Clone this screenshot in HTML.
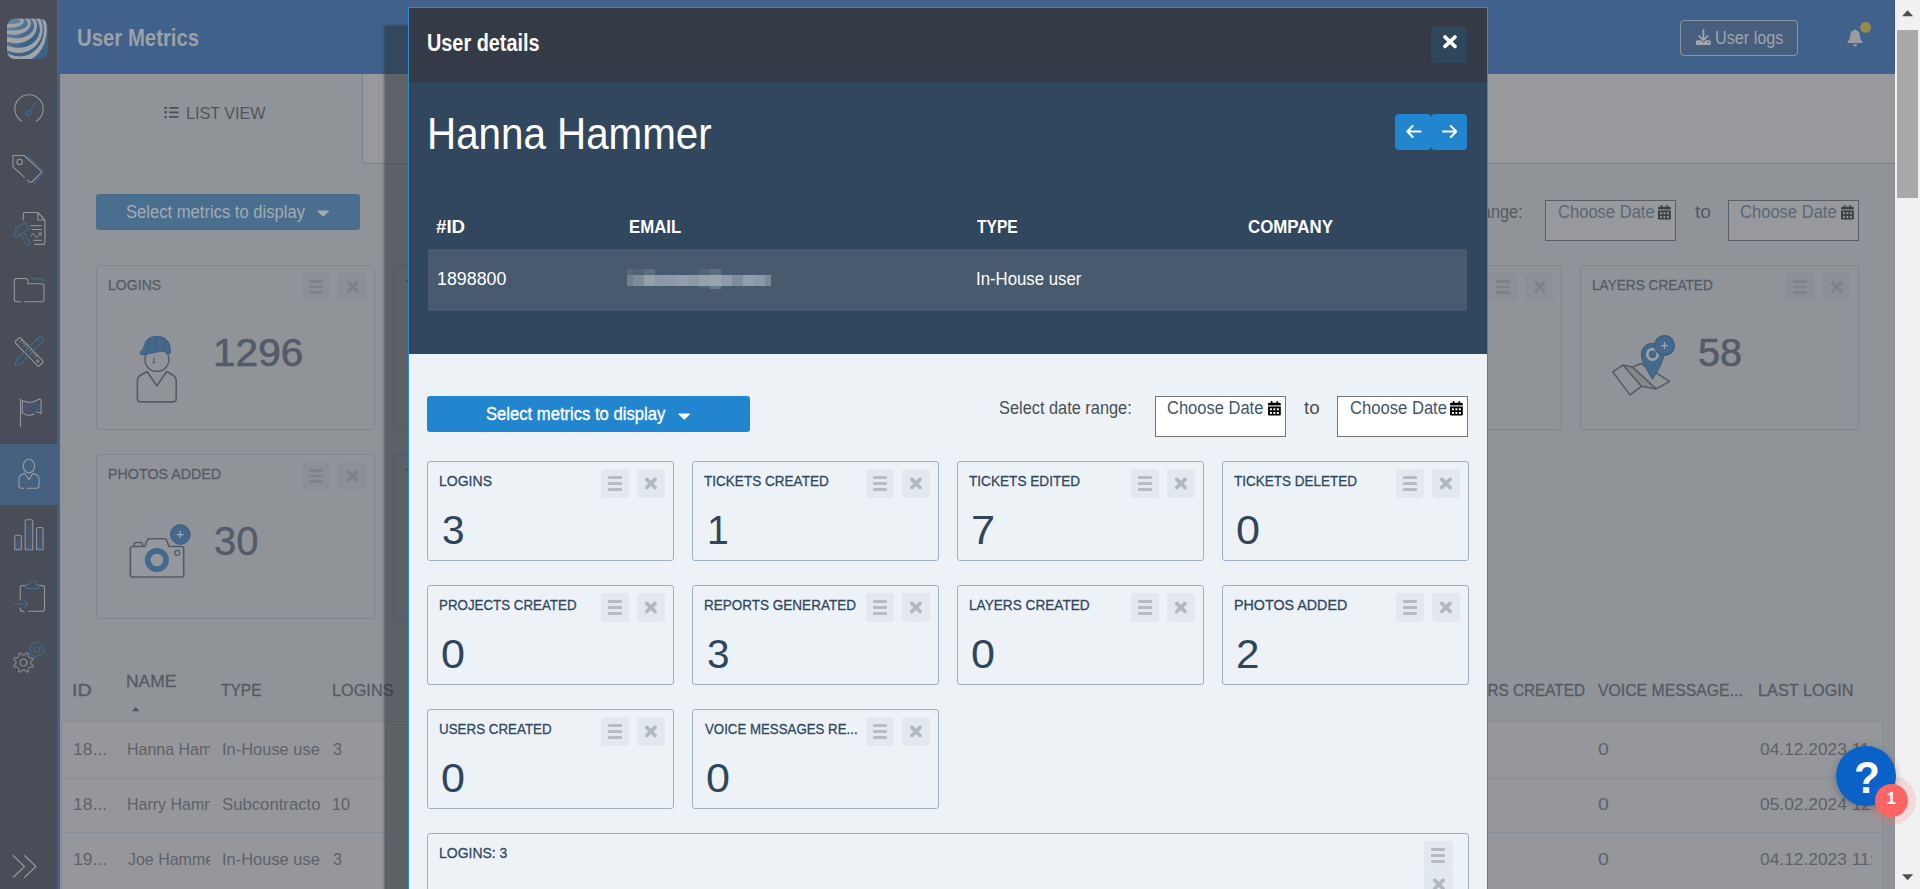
<!DOCTYPE html>
<html lang="en"><head><meta charset="utf-8"><title>User Metrics</title>
<style>
html,body{margin:0;padding:0;}
body{width:1920px;height:889px;overflow:hidden;position:relative;background:#909499;font-family:"Liberation Sans",sans-serif;}
.t{position:absolute;transform-origin:0 0;white-space:pre;font-family:"Liberation Sans",sans-serif;}
svg{position:absolute;overflow:visible;}
.clip{position:absolute;overflow:hidden;}

</style></head>
<body>
<div style="position:absolute;left:0px;top:0px;width:57px;height:889px;background:#484d57;"></div>
<div style="position:absolute;left:0px;top:138px;width:57px;height:1px;background:#434852;"></div>
<div style="position:absolute;left:0px;top:199px;width:57px;height:1px;background:#434852;"></div>
<div style="position:absolute;left:0px;top:260px;width:57px;height:1px;background:#434852;"></div>
<div style="position:absolute;left:0px;top:321px;width:57px;height:1px;background:#434852;"></div>
<div style="position:absolute;left:0px;top:382.5px;width:57px;height:1px;background:#434852;"></div>
<div style="position:absolute;left:0px;top:565.5px;width:57px;height:1px;background:#434852;"></div>
<div style="position:absolute;left:0px;top:626.5px;width:57px;height:1px;background:#434852;"></div>
<div style="position:absolute;left:0px;top:687.5px;width:57px;height:1px;background:#434852;"></div>
<div style="position:absolute;left:0px;top:841.5px;width:57px;height:1px;background:#434852;"></div>
<div style="position:absolute;left:0px;top:444px;width:57px;height:61px;background:#46607f;"></div>
<div style="position:absolute;left:57px;top:0px;width:3px;height:889px;background:#46618a;"></div>
<div style="position:absolute;left:60px;top:0px;width:1835px;height:74px;background:#3f618b;"></div>
<span class="t" style="left:76.98px;top:26.89px;font-size:23.4px;line-height:23.4px;color:#9da0a5;font-weight:700;transform:scaleX(0.8695);">User Metrics</span>
<div style="position:absolute;left:1680px;top:20px;width:116px;height:34px;border:1px solid #8d95a1;background:#475f7f;border-radius:4px;"></div>
<span class="t" style="left:1714.65px;top:28.76px;font-size:18px;line-height:18px;color:#a0a4ab;transform:scaleX(0.9001);">User logs</span>
<div style="position:absolute;left:362px;top:74px;width:1533px;height:89px;background:#97999d;border-left:1px solid #78818d;border-bottom:1px solid #78818d;border-bottom-left-radius:4px;"></div>
<span class="t" style="left:186.18px;top:104.61px;font-size:17px;line-height:17px;color:#50545a;transform:scaleX(0.9501);">LIST VIEW</span>
<div style="position:absolute;left:96px;top:194px;width:264px;height:36px;background:#4a6e8d;border-radius:3px;"></div>
<span class="t" style="left:126.05px;top:202.76px;font-size:18px;line-height:18px;color:#a3abb3;transform:scaleX(0.9222);">Select metrics to display</span>
<div style="position:absolute;left:397px;top:194px;width:200px;height:39px;border:1px solid #999ca1;border-radius:5px;"></div>
<span class="t" style="left:1389.76px;top:202.96px;font-size:18px;line-height:18px;color:#55595f;transform:scaleX(0.9085);">Select date range:</span>
<div style="position:absolute;left:1545px;top:200px;width:129px;height:39px;background:#97999d;border:1px solid #5a5e66;"></div>
<span class="t" style="left:1557.86px;top:202.96px;font-size:18px;line-height:18px;color:#5c6775;transform:scaleX(0.9201);">Choose Date</span>
<div style="position:absolute;left:1728px;top:200px;width:129px;height:39px;background:#97999d;border:1px solid #5a5e66;"></div>
<span class="t" style="left:1740.46px;top:202.96px;font-size:18px;line-height:18px;color:#5c6775;transform:scaleX(0.9201);">Choose Date</span>
<span class="t" style="left:1694.71px;top:202.96px;font-size:18px;line-height:18px;color:#55595f;transform:scaleX(1.0584);">to</span>
<div style="position:absolute;left:96px;top:265px;width:277px;height:163px;border:1px solid #7d8792;border-radius:3px;"></div>
<span class="t" style="left:108.25px;top:276.88px;font-size:15.5px;line-height:15.5px;color:#555b66;transform:scaleX(0.9083);-webkit-text-stroke:0.3px #555b66;">LOGINS</span>
<div style="position:absolute;left:302px;top:273px;width:28px;height:28px;background:#8b8f98;border-radius:3px;"></div>
<div style="position:absolute;left:338px;top:273px;width:28px;height:28px;background:#8b8f98;border-radius:3px;"></div>
<div style="position:absolute;left:309px;top:280.0px;width:14px;height:2.9px;background:#7d8188;border-radius:1px;"></div>
<div style="position:absolute;left:309px;top:285.6px;width:14px;height:2.9px;background:#7d8188;border-radius:1px;"></div>
<div style="position:absolute;left:309px;top:291.2px;width:14px;height:2.9px;background:#7d8188;border-radius:1px;"></div>
<svg style="left:346.5px;top:281.2px" width="11.5" height="11.8" viewBox="0 0 12 12"><path d="M1.6 1.6 L10.4 10.4 M10.4 1.6 L1.6 10.4" stroke="#7d8188" stroke-width="3.2" stroke-linecap="round"/></svg>
<span class="t" style="left:213.11px;top:332.79px;font-size:39px;line-height:39px;color:#545b68;transform:scaleX(1.0404);-webkit-text-stroke:0.7px #545b68;">1296</span>
<div style="position:absolute;left:96px;top:454px;width:277px;height:163px;border:1px solid #7d8792;border-radius:3px;"></div>
<span class="t" style="left:108.23px;top:465.88px;font-size:15.5px;line-height:15.5px;color:#555b66;transform:scaleX(0.9208);-webkit-text-stroke:0.3px #555b66;">PHOTOS ADDED</span>
<div style="position:absolute;left:302px;top:462px;width:28px;height:28px;background:#8b8f98;border-radius:3px;"></div>
<div style="position:absolute;left:338px;top:462px;width:28px;height:28px;background:#8b8f98;border-radius:3px;"></div>
<div style="position:absolute;left:309px;top:469.0px;width:14px;height:2.9px;background:#7d8188;border-radius:1px;"></div>
<div style="position:absolute;left:309px;top:474.6px;width:14px;height:2.9px;background:#7d8188;border-radius:1px;"></div>
<div style="position:absolute;left:309px;top:480.2px;width:14px;height:2.9px;background:#7d8188;border-radius:1px;"></div>
<svg style="left:346.5px;top:470.2px" width="11.5" height="11.8" viewBox="0 0 12 12"><path d="M1.6 1.6 L10.4 10.4 M10.4 1.6 L1.6 10.4" stroke="#7d8188" stroke-width="3.2" stroke-linecap="round"/></svg>
<span class="t" style="left:214.08px;top:520.92px;font-size:40.5px;line-height:40.5px;color:#545b68;transform:scaleX(0.9875);-webkit-text-stroke:0.35px #545b68;">30</span>
<div style="position:absolute;left:393px;top:265px;width:277px;height:163px;border:1px solid #7d8792;border-radius:3px;"></div>
<span class="t" style="left:405.86px;top:276.88px;font-size:15.5px;line-height:15.5px;color:#555b66;transform:scaleX(0.8757);-webkit-text-stroke:0.3px #555b66;">TICKETS CREATED</span>
<div style="position:absolute;left:599px;top:273px;width:28px;height:28px;background:#8b8f98;border-radius:3px;"></div>
<div style="position:absolute;left:635px;top:273px;width:28px;height:28px;background:#8b8f98;border-radius:3px;"></div>
<div style="position:absolute;left:606px;top:280.0px;width:14px;height:2.9px;background:#7d8188;border-radius:1px;"></div>
<div style="position:absolute;left:606px;top:285.6px;width:14px;height:2.9px;background:#7d8188;border-radius:1px;"></div>
<div style="position:absolute;left:606px;top:291.2px;width:14px;height:2.9px;background:#7d8188;border-radius:1px;"></div>
<svg style="left:643.5px;top:281.2px" width="11.5" height="11.8" viewBox="0 0 12 12"><path d="M1.6 1.6 L10.4 10.4 M10.4 1.6 L1.6 10.4" stroke="#7d8188" stroke-width="3.2" stroke-linecap="round"/></svg>
<div style="position:absolute;left:393px;top:454px;width:277px;height:163px;border:1px solid #7d8792;border-radius:3px;"></div>
<span class="t" style="left:405.85px;top:465.88px;font-size:15.5px;line-height:15.5px;color:#555b66;transform:scaleX(0.8764);-webkit-text-stroke:0.3px #555b66;">TICKETS EDITED</span>
<div style="position:absolute;left:599px;top:462px;width:28px;height:28px;background:#8b8f98;border-radius:3px;"></div>
<div style="position:absolute;left:635px;top:462px;width:28px;height:28px;background:#8b8f98;border-radius:3px;"></div>
<div style="position:absolute;left:606px;top:469.0px;width:14px;height:2.9px;background:#7d8188;border-radius:1px;"></div>
<div style="position:absolute;left:606px;top:474.6px;width:14px;height:2.9px;background:#7d8188;border-radius:1px;"></div>
<div style="position:absolute;left:606px;top:480.2px;width:14px;height:2.9px;background:#7d8188;border-radius:1px;"></div>
<svg style="left:643.5px;top:470.2px" width="11.5" height="11.8" viewBox="0 0 12 12"><path d="M1.6 1.6 L10.4 10.4 M10.4 1.6 L1.6 10.4" stroke="#7d8188" stroke-width="3.2" stroke-linecap="round"/></svg>
<div style="position:absolute;left:1283px;top:265px;width:277px;height:163px;border:1px solid #7d8792;border-radius:3px;"></div>
<span class="t" style="left:1295.33px;top:276.88px;font-size:15.5px;line-height:15.5px;color:#555b66;transform:scaleX(0.8708);-webkit-text-stroke:0.3px #555b66;">REPORTS GENERATED</span>
<div style="position:absolute;left:1489px;top:273px;width:28px;height:28px;background:#8b8f98;border-radius:3px;"></div>
<div style="position:absolute;left:1525px;top:273px;width:28px;height:28px;background:#8b8f98;border-radius:3px;"></div>
<div style="position:absolute;left:1496px;top:280.0px;width:14px;height:2.9px;background:#7d8188;border-radius:1px;"></div>
<div style="position:absolute;left:1496px;top:285.6px;width:14px;height:2.9px;background:#7d8188;border-radius:1px;"></div>
<div style="position:absolute;left:1496px;top:291.2px;width:14px;height:2.9px;background:#7d8188;border-radius:1px;"></div>
<svg style="left:1533.5px;top:281.2px" width="11.5" height="11.8" viewBox="0 0 12 12"><path d="M1.6 1.6 L10.4 10.4 M10.4 1.6 L1.6 10.4" stroke="#7d8188" stroke-width="3.2" stroke-linecap="round"/></svg>
<div style="position:absolute;left:1580px;top:265px;width:277px;height:163px;border:1px solid #7d8792;border-radius:3px;"></div>
<span class="t" style="left:1592.08px;top:276.88px;font-size:15.5px;line-height:15.5px;color:#555b66;transform:scaleX(0.8799);-webkit-text-stroke:0.3px #555b66;">LAYERS CREATED</span>
<div style="position:absolute;left:1786px;top:273px;width:28px;height:28px;background:#8b8f98;border-radius:3px;"></div>
<div style="position:absolute;left:1822px;top:273px;width:28px;height:28px;background:#8b8f98;border-radius:3px;"></div>
<div style="position:absolute;left:1793px;top:280.0px;width:14px;height:2.9px;background:#7d8188;border-radius:1px;"></div>
<div style="position:absolute;left:1793px;top:285.6px;width:14px;height:2.9px;background:#7d8188;border-radius:1px;"></div>
<div style="position:absolute;left:1793px;top:291.2px;width:14px;height:2.9px;background:#7d8188;border-radius:1px;"></div>
<svg style="left:1830.5px;top:281.2px" width="11.5" height="11.8" viewBox="0 0 12 12"><path d="M1.6 1.6 L10.4 10.4 M10.4 1.6 L1.6 10.4" stroke="#7d8188" stroke-width="3.2" stroke-linecap="round"/></svg>
<span class="t" style="left:1698.42px;top:332.79px;font-size:39px;line-height:39px;color:#545b68;transform:scaleX(1.0143);-webkit-text-stroke:0.7px #545b68;">58</span>
<span class="t" style="left:71.59px;top:682.03px;font-size:16.5px;line-height:16.5px;color:#555a62;transform:scaleX(1.1912);-webkit-text-stroke:0.3px #555a62;">ID</span>
<span class="t" style="left:125.77px;top:672.83px;font-size:16.5px;line-height:16.5px;color:#555a62;transform:scaleX(1.0569);-webkit-text-stroke:0.3px #555a62;">NAME</span>
<svg style="left:132px;top:706.5px" width="7.5" height="4.2" viewBox="0 0 10 5.6"><path d="M0 5.6 L5 0 L10 5.6 Z" fill="#4e535b"/></svg>
<span class="t" style="left:221.35px;top:682.03px;font-size:16.5px;line-height:16.5px;color:#555a62;transform:scaleX(0.9402);-webkit-text-stroke:0.3px #555a62;">TYPE</span>
<span class="t" style="left:331.87px;top:682.03px;font-size:16.5px;line-height:16.5px;color:#555a62;transform:scaleX(0.9860);-webkit-text-stroke:0.3px #555a62;">LOGINS</span>
<span class="t" style="left:1456.02px;top:682.03px;font-size:16.5px;line-height:16.5px;color:#555a62;transform:scaleX(0.9272);-webkit-text-stroke:0.3px #555a62;">USERS CREATED</span>
<span class="t" style="left:1598.43px;top:682.03px;font-size:16.5px;line-height:16.5px;color:#555a62;transform:scaleX(0.9572);-webkit-text-stroke:0.3px #555a62;">VOICE MESSAGE...</span>
<span class="t" style="left:1758.17px;top:682.03px;font-size:16.5px;line-height:16.5px;color:#555a62;transform:scaleX(0.9862);-webkit-text-stroke:0.3px #555a62;">LAST LOGIN</span>
<div style="position:absolute;left:61px;top:721px;width:1820px;height:170px;background:#95979b;border:1px solid #858c96;"></div>
<div style="position:absolute;left:62px;top:777px;width:1820px;height:1px;background:#878d96;"></div>
<div style="position:absolute;left:62px;top:832px;width:1820px;height:1px;background:#878d96;"></div>
<span class="t" style="left:73.27px;top:740.51px;font-size:17px;line-height:17px;color:#5e6268;transform:scaleX(1.0289);">18...</span>
<div class="clip" style="left:120px;top:734.9px;width:89.9px;height:30px"><span class="t" style="left:6.79px;top:5.61px;font-size:17px;line-height:17px;color:#5e6268;transform:scaleX(0.9395);">Hanna Hammer</span>
</div>
<div class="clip" style="left:215px;top:734.9px;width:105px;height:30px"><span class="t" style="left:6.58px;top:5.61px;font-size:17px;line-height:17px;color:#5e6268;transform:scaleX(0.9678);">In-House user</span>
</div>
<span class="t" style="left:333.08px;top:740.51px;font-size:17px;line-height:17px;color:#5e6268;transform:scaleX(0.9500);">3</span>
<span class="t" style="left:1598.24px;top:740.51px;font-size:17px;line-height:17px;color:#5e6268;transform:scaleX(1.1446);">0</span>
<div class="clip" style="left:1750px;top:734.9px;width:122px;height:30px"><span class="t" style="left:9.52px;top:5.61px;font-size:17px;line-height:17px;color:#5e6268;transform:scaleX(1.0214);">04.12.2023 11:0</span>
</div>
<span class="t" style="left:73.27px;top:795.61px;font-size:17px;line-height:17px;color:#5e6268;transform:scaleX(1.0289);">18...</span>
<div class="clip" style="left:120px;top:790px;width:89.9px;height:30px"><span class="t" style="left:6.79px;top:5.61px;font-size:17px;line-height:17px;color:#5e6268;transform:scaleX(0.9395);">Harry Hammer</span>
</div>
<div class="clip" style="left:215px;top:790px;width:105px;height:30px"><span class="t" style="left:6.94px;top:5.61px;font-size:17px;line-height:17px;color:#5e6268;transform:scaleX(0.9830);">Subcontractor</span>
</div>
<span class="t" style="left:332.47px;top:795.61px;font-size:17px;line-height:17px;color:#5e6268;transform:scaleX(0.9500);">10</span>
<span class="t" style="left:1598.24px;top:795.61px;font-size:17px;line-height:17px;color:#5e6268;transform:scaleX(1.1446);">0</span>
<div class="clip" style="left:1750px;top:790px;width:122px;height:30px"><span class="t" style="left:9.52px;top:5.61px;font-size:17px;line-height:17px;color:#5e6268;transform:scaleX(1.0214);">05.02.2024 12:0</span>
</div>
<span class="t" style="left:73.27px;top:850.61px;font-size:17px;line-height:17px;color:#5e6268;transform:scaleX(1.0289);">19...</span>
<div class="clip" style="left:120px;top:845px;width:89.9px;height:30px"><span class="t" style="left:8.35px;top:5.61px;font-size:17px;line-height:17px;color:#5e6268;transform:scaleX(0.9395);">Joe Hammer</span>
</div>
<div class="clip" style="left:215px;top:845px;width:105px;height:30px"><span class="t" style="left:6.58px;top:5.61px;font-size:17px;line-height:17px;color:#5e6268;transform:scaleX(0.9678);">In-House user</span>
</div>
<span class="t" style="left:333.08px;top:850.61px;font-size:17px;line-height:17px;color:#5e6268;transform:scaleX(0.9500);">3</span>
<span class="t" style="left:1598.24px;top:850.61px;font-size:17px;line-height:17px;color:#5e6268;transform:scaleX(1.1446);">0</span>
<div class="clip" style="left:1750px;top:845px;width:122px;height:30px"><span class="t" style="left:9.52px;top:5.61px;font-size:17px;line-height:17px;color:#5e6268;transform:scaleX(1.0214);">04.12.2023 11:0</span>
</div>
<div style="position:absolute;left:385px;top:26px;width:1080px;height:870px;background:rgba(39,45,51,0.5);box-shadow:0 0 2px 1px rgba(39,45,51,0.5);"></div>
<div style="position:absolute;left:1895px;top:0px;width:25px;height:889px;background:#f1f1f1;"></div>
<div style="position:absolute;left:1897px;top:30px;width:21px;height:168px;background:#a9a9a9;"></div>
<svg style="left:1902.3px;top:9.5px" width="11.2" height="6.5" viewBox="0 0 11 6"><path d="M0 6 L5.5 0 L11 6 Z" fill="#505050"/></svg>
<svg style="left:1902.3px;top:873.6px" width="11.2" height="6.5" viewBox="0 0 11 6"><path d="M0 0 L5.5 6 L11 0 Z" fill="#505050"/></svg>
<div style="position:absolute;left:408px;top:7px;width:1078px;height:900px;border:1px solid #2a8dd2;background:#edf2f7;"></div>
<div style="position:absolute;left:409px;top:8px;width:1078px;height:74px;background:#353a47;"></div>
<span class="t" style="left:426.91px;top:32.13px;font-size:23px;line-height:23px;color:#ffffff;font-weight:700;transform:scaleX(0.8627);">User details</span>
<div style="position:absolute;left:1431px;top:27px;width:36px;height:36px;background:#30465b;border-radius:3px;"></div>
<svg style="left:1442.5px;top:35.4px" width="14" height="13.4" viewBox="0 0 14 13.4"><path d="M2 2 L12 11.4 M12 2 L2 11.4" stroke="#fff" stroke-width="3.7" stroke-linecap="round"/></svg>
<div style="position:absolute;left:409px;top:82px;width:1078px;height:272px;background:#31475e;"></div>
<span class="t" style="left:426.69px;top:111.85px;font-size:44px;line-height:44px;color:#ffffff;transform:scaleX(0.9166);">Hanna Hammer</span>
<div style="position:absolute;left:1395px;top:114px;width:36px;height:36px;background:#2185d0;border-radius:4px;"></div>
<div style="position:absolute;left:1431px;top:114px;width:36px;height:36px;background:#2185d0;border-radius:4px;"></div>
<svg style="left:1405.5px;top:125px" width="15.5" height="13" viewBox="0 0 15.5 13"><path d="M14.6 6.5 H1.2 M6.7 1 L1.2 6.5 L6.7 12" fill="none" stroke="#fff" stroke-width="2" stroke-linecap="round" stroke-linejoin="round"/></svg>
<svg style="left:1441.5px;top:125px" width="15.5" height="13" viewBox="0 0 15.5 13"><path d="M0.9 6.5 H14.3 M8.8 1 L14.3 6.5 L8.8 12" fill="none" stroke="#fff" stroke-width="2" stroke-linecap="round" stroke-linejoin="round"/></svg>
<span class="t" style="left:436.43px;top:216.62px;font-size:19px;line-height:19px;color:#ffffff;font-weight:700;transform:scaleX(0.9826);">#ID</span>
<span class="t" style="left:629.38px;top:216.62px;font-size:19px;line-height:19px;color:#ffffff;font-weight:700;transform:scaleX(0.8821);">EMAIL</span>
<span class="t" style="left:977.32px;top:216.62px;font-size:19px;line-height:19px;color:#ffffff;font-weight:700;transform:scaleX(0.8219);">TYPE</span>
<span class="t" style="left:1247.81px;top:216.62px;font-size:19px;line-height:19px;color:#ffffff;font-weight:700;transform:scaleX(0.8877);">COMPANY</span>
<div style="position:absolute;left:428px;top:249px;width:1039px;height:62px;background:#485a6d;"></div>
<span class="t" style="left:436.84px;top:269.96px;font-size:18px;line-height:18px;color:#ffffff;transform:scaleX(0.9896);">1898800</span>
<span class="t" style="left:975.95px;top:269.96px;font-size:18px;line-height:18px;color:#ffffff;transform:scaleX(0.9316);">In-House user</span>
<div style="position:absolute;left:627.2px;top:275px;width:6px;height:11px;background:#6f7f8f;"></div>
<div style="position:absolute;left:633px;top:275px;width:11px;height:11px;background:#7d8c9a;"></div>
<div style="position:absolute;left:644px;top:275px;width:11px;height:11px;background:#93a0ac;"></div>
<div style="position:absolute;left:655px;top:275px;width:11px;height:11px;background:#8a98a5;"></div>
<div style="position:absolute;left:666px;top:275px;width:11px;height:11px;background:#8d9aa7;"></div>
<div style="position:absolute;left:677px;top:275px;width:11px;height:11px;background:#93a0ac;"></div>
<div style="position:absolute;left:688px;top:275px;width:11px;height:11px;background:#8c99a6;"></div>
<div style="position:absolute;left:699px;top:275px;width:11px;height:11px;background:#94a1ad;"></div>
<div style="position:absolute;left:710px;top:275px;width:11px;height:11px;background:#97a3af;"></div>
<div style="position:absolute;left:721px;top:275px;width:11px;height:11px;background:#8e9ba8;"></div>
<div style="position:absolute;left:732px;top:275px;width:11px;height:11px;background:#7e8d9b;"></div>
<div style="position:absolute;left:743px;top:275px;width:11px;height:11px;background:#909daa;"></div>
<div style="position:absolute;left:754px;top:275px;width:11px;height:11px;background:#8b98a5;"></div>
<div style="position:absolute;left:765px;top:275px;width:6px;height:11px;background:#7b8a98;"></div>
<div style="position:absolute;left:627.2px;top:269.2px;width:6px;height:6px;background:#56687a;"></div>
<div style="position:absolute;left:633px;top:269.2px;width:11px;height:6px;background:#506274;"></div>
<div style="position:absolute;left:644px;top:269.2px;width:11px;height:6px;background:#5c6d7e;"></div>
<div style="position:absolute;left:699px;top:269.2px;width:11px;height:6px;background:#526476;"></div>
<div style="position:absolute;left:710px;top:269.2px;width:11px;height:6px;background:#5e6f80;"></div>
<div style="position:absolute;left:699px;top:286px;width:11px;height:2px;background:#55677a;"></div>
<div style="position:absolute;left:710px;top:286px;width:11px;height:3px;background:#6a7a8a;"></div>
<div style="position:absolute;left:427px;top:396px;width:323px;height:36px;background:#2185d0;border-radius:3px;"></div>
<span class="t" style="left:485.95px;top:404.76px;font-size:18px;line-height:18px;color:#ffffff;transform:scaleX(0.9233);-webkit-text-stroke:0.35px #fff;">Select metrics to display</span>
<svg style="left:678px;top:412.5px" width="12.4" height="6.8" viewBox="0 0 12.4 6.8"><path d="M1 0.6 H11.4 Q12.2 0.8 11.7 1.5 L6.8 6.3 Q6.2 6.8 5.6 6.3 L0.7 1.5 Q0.2 0.8 1 0.6 Z" fill="#fff"/></svg>
<svg style="left:316.7px;top:210.3px" width="12.4" height="6.8" viewBox="0 0 12.4 6.8"><path d="M1 0.6 H11.4 Q12.2 0.8 11.7 1.5 L6.8 6.3 Q6.2 6.8 5.6 6.3 L0.7 1.5 Q0.2 0.8 1 0.6 Z" fill="#a3abb3"/></svg>
<span class="t" style="left:999.06px;top:399.16px;font-size:18px;line-height:18px;color:#4a4f55;transform:scaleX(0.9085);">Select date range:</span>
<div style="position:absolute;left:1155px;top:396px;width:129px;height:39px;background:#ffffff;border:1px solid #767676;"></div>
<span class="t" style="left:1167.36px;top:399.16px;font-size:18px;line-height:18px;color:#3f566e;transform:scaleX(0.9172);">Choose Date</span>
<div style="position:absolute;left:1337px;top:396px;width:129px;height:39px;background:#ffffff;border:1px solid #767676;"></div>
<span class="t" style="left:1349.66px;top:399.16px;font-size:18px;line-height:18px;color:#3f566e;transform:scaleX(0.9230);">Choose Date</span>
<span class="t" style="left:1304.22px;top:399.16px;font-size:18px;line-height:18px;color:#4a4f55;transform:scaleX(1.0369);">to</span>
<div style="position:absolute;left:427px;top:461px;width:245px;height:98px;border:1px solid #9eb0c2;border-radius:3px;"></div>
<span class="t" style="left:438.55px;top:473.18px;font-size:15.5px;line-height:15.5px;color:#31475e;transform:scaleX(0.9048);-webkit-text-stroke:0.3px #31475e;">LOGINS</span>
<div style="position:absolute;left:601.25px;top:469px;width:27.5px;height:29px;background:#e2e8ef;border-radius:3px;"></div>
<div style="position:absolute;left:637.2px;top:469px;width:27.6px;height:29px;background:#e2e8ef;border-radius:3px;"></div>
<div style="position:absolute;left:608.15px;top:476.0px;width:13.75px;height:3px;background:#b5bbc0;border-radius:1px;"></div>
<div style="position:absolute;left:608.15px;top:481.75px;width:13.75px;height:3px;background:#b5bbc0;border-radius:1px;"></div>
<div style="position:absolute;left:608.15px;top:487.5px;width:13.75px;height:3px;background:#b5bbc0;border-radius:1px;"></div>
<svg style="left:637.2px;top:469px" width="28" height="29" viewBox="637.2 469 28 29"><path d="M646.95 479.34999999999997 L655.25 487.55 M655.25 479.34999999999997 L646.95 487.55" stroke="#b1b8bf" stroke-width="3.7" stroke-linecap="round"/></svg>
<span class="t" style="left:441.96px;top:510.14px;font-size:40px;line-height:40px;color:#2f455c;transform:scaleX(1.0124);">3</span>
<div style="position:absolute;left:692px;top:461px;width:245px;height:98px;border:1px solid #9eb0c2;border-radius:3px;"></div>
<span class="t" style="left:704.40px;top:473.18px;font-size:15.5px;line-height:15.5px;color:#31475e;transform:scaleX(0.8743);-webkit-text-stroke:0.3px #31475e;">TICKETS CREATED</span>
<div style="position:absolute;left:866.25px;top:469px;width:27.5px;height:29px;background:#e2e8ef;border-radius:3px;"></div>
<div style="position:absolute;left:902.2px;top:469px;width:27.6px;height:29px;background:#e2e8ef;border-radius:3px;"></div>
<div style="position:absolute;left:873.15px;top:476.0px;width:13.75px;height:3px;background:#b5bbc0;border-radius:1px;"></div>
<div style="position:absolute;left:873.15px;top:481.75px;width:13.75px;height:3px;background:#b5bbc0;border-radius:1px;"></div>
<div style="position:absolute;left:873.15px;top:487.5px;width:13.75px;height:3px;background:#b5bbc0;border-radius:1px;"></div>
<svg style="left:902.2px;top:469px" width="28" height="29" viewBox="902.2 469 28 29"><path d="M911.95 479.34999999999997 L920.25 487.55 M920.25 479.34999999999997 L911.95 487.55" stroke="#b1b8bf" stroke-width="3.7" stroke-linecap="round"/></svg>
<span class="t" style="left:706.51px;top:510.14px;font-size:40px;line-height:40px;color:#2f455c;transform:scaleX(0.9799);">1</span>
<div style="position:absolute;left:957px;top:461px;width:245px;height:98px;border:1px solid #9eb0c2;border-radius:3px;"></div>
<span class="t" style="left:969.39px;top:473.18px;font-size:15.5px;line-height:15.5px;color:#31475e;transform:scaleX(0.8780);-webkit-text-stroke:0.3px #31475e;">TICKETS EDITED</span>
<div style="position:absolute;left:1131.25px;top:469px;width:27.5px;height:29px;background:#e2e8ef;border-radius:3px;"></div>
<div style="position:absolute;left:1167.2px;top:469px;width:27.6px;height:29px;background:#e2e8ef;border-radius:3px;"></div>
<div style="position:absolute;left:1138.15px;top:476.0px;width:13.75px;height:3px;background:#b5bbc0;border-radius:1px;"></div>
<div style="position:absolute;left:1138.15px;top:481.75px;width:13.75px;height:3px;background:#b5bbc0;border-radius:1px;"></div>
<div style="position:absolute;left:1138.15px;top:487.5px;width:13.75px;height:3px;background:#b5bbc0;border-radius:1px;"></div>
<svg style="left:1167.2px;top:469px" width="28" height="29" viewBox="1167.2 469 28 29"><path d="M1176.95 479.34999999999997 L1185.2500000000002 487.55 M1185.2500000000002 479.34999999999997 L1176.95 487.55" stroke="#b1b8bf" stroke-width="3.7" stroke-linecap="round"/></svg>
<span class="t" style="left:970.78px;top:510.14px;font-size:40px;line-height:40px;color:#2f455c;transform:scaleX(1.0834);">7</span>
<div style="position:absolute;left:1222px;top:461px;width:245px;height:98px;border:1px solid #9eb0c2;border-radius:3px;"></div>
<span class="t" style="left:1234.40px;top:473.18px;font-size:15.5px;line-height:15.5px;color:#31475e;transform:scaleX(0.8704);-webkit-text-stroke:0.3px #31475e;">TICKETS DELETED</span>
<div style="position:absolute;left:1396.25px;top:469px;width:27.5px;height:29px;background:#e2e8ef;border-radius:3px;"></div>
<div style="position:absolute;left:1432.2px;top:469px;width:27.6px;height:29px;background:#e2e8ef;border-radius:3px;"></div>
<div style="position:absolute;left:1403.15px;top:476.0px;width:13.75px;height:3px;background:#b5bbc0;border-radius:1px;"></div>
<div style="position:absolute;left:1403.15px;top:481.75px;width:13.75px;height:3px;background:#b5bbc0;border-radius:1px;"></div>
<div style="position:absolute;left:1403.15px;top:487.5px;width:13.75px;height:3px;background:#b5bbc0;border-radius:1px;"></div>
<svg style="left:1432.2px;top:469px" width="28" height="29" viewBox="1432.2 469 28 29"><path d="M1441.95 479.34999999999997 L1450.2500000000002 487.55 M1450.2500000000002 479.34999999999997 L1441.95 487.55" stroke="#b1b8bf" stroke-width="3.7" stroke-linecap="round"/></svg>
<span class="t" style="left:1235.82px;top:510.14px;font-size:40px;line-height:40px;color:#2f455c;transform:scaleX(1.0773);">0</span>
<div style="position:absolute;left:427px;top:585px;width:245px;height:98px;border:1px solid #9eb0c2;border-radius:3px;"></div>
<span class="t" style="left:438.61px;top:597.18px;font-size:15.5px;line-height:15.5px;color:#31475e;transform:scaleX(0.8600);-webkit-text-stroke:0.3px #31475e;">PROJECTS CREATED</span>
<div style="position:absolute;left:601.25px;top:593px;width:27.5px;height:29px;background:#e2e8ef;border-radius:3px;"></div>
<div style="position:absolute;left:637.2px;top:593px;width:27.6px;height:29px;background:#e2e8ef;border-radius:3px;"></div>
<div style="position:absolute;left:608.15px;top:600.0px;width:13.75px;height:3px;background:#b5bbc0;border-radius:1px;"></div>
<div style="position:absolute;left:608.15px;top:605.75px;width:13.75px;height:3px;background:#b5bbc0;border-radius:1px;"></div>
<div style="position:absolute;left:608.15px;top:611.5px;width:13.75px;height:3px;background:#b5bbc0;border-radius:1px;"></div>
<svg style="left:637.2px;top:593px" width="28" height="29" viewBox="637.2 593 28 29"><path d="M646.95 603.35 L655.25 611.5500000000001 M655.25 603.35 L646.95 611.5500000000001" stroke="#b1b8bf" stroke-width="3.7" stroke-linecap="round"/></svg>
<span class="t" style="left:440.82px;top:634.14px;font-size:40px;line-height:40px;color:#2f455c;transform:scaleX(1.0773);">0</span>
<div style="position:absolute;left:692px;top:585px;width:245px;height:98px;border:1px solid #9eb0c2;border-radius:3px;"></div>
<span class="t" style="left:703.59px;top:597.18px;font-size:15.5px;line-height:15.5px;color:#31475e;transform:scaleX(0.8719);-webkit-text-stroke:0.3px #31475e;">REPORTS GENERATED</span>
<div style="position:absolute;left:866.25px;top:593px;width:27.5px;height:29px;background:#e2e8ef;border-radius:3px;"></div>
<div style="position:absolute;left:902.2px;top:593px;width:27.6px;height:29px;background:#e2e8ef;border-radius:3px;"></div>
<div style="position:absolute;left:873.15px;top:600.0px;width:13.75px;height:3px;background:#b5bbc0;border-radius:1px;"></div>
<div style="position:absolute;left:873.15px;top:605.75px;width:13.75px;height:3px;background:#b5bbc0;border-radius:1px;"></div>
<div style="position:absolute;left:873.15px;top:611.5px;width:13.75px;height:3px;background:#b5bbc0;border-radius:1px;"></div>
<svg style="left:902.2px;top:593px" width="28" height="29" viewBox="902.2 593 28 29"><path d="M911.95 603.35 L920.25 611.5500000000001 M920.25 603.35 L911.95 611.5500000000001" stroke="#b1b8bf" stroke-width="3.7" stroke-linecap="round"/></svg>
<span class="t" style="left:706.96px;top:634.14px;font-size:40px;line-height:40px;color:#2f455c;transform:scaleX(1.0124);">3</span>
<div style="position:absolute;left:957px;top:585px;width:245px;height:98px;border:1px solid #9eb0c2;border-radius:3px;"></div>
<span class="t" style="left:968.58px;top:597.18px;font-size:15.5px;line-height:15.5px;color:#31475e;transform:scaleX(0.8791);-webkit-text-stroke:0.3px #31475e;">LAYERS CREATED</span>
<div style="position:absolute;left:1131.25px;top:593px;width:27.5px;height:29px;background:#e2e8ef;border-radius:3px;"></div>
<div style="position:absolute;left:1167.2px;top:593px;width:27.6px;height:29px;background:#e2e8ef;border-radius:3px;"></div>
<div style="position:absolute;left:1138.15px;top:600.0px;width:13.75px;height:3px;background:#b5bbc0;border-radius:1px;"></div>
<div style="position:absolute;left:1138.15px;top:605.75px;width:13.75px;height:3px;background:#b5bbc0;border-radius:1px;"></div>
<div style="position:absolute;left:1138.15px;top:611.5px;width:13.75px;height:3px;background:#b5bbc0;border-radius:1px;"></div>
<svg style="left:1167.2px;top:593px" width="28" height="29" viewBox="1167.2 593 28 29"><path d="M1176.95 603.35 L1185.2500000000002 611.5500000000001 M1185.2500000000002 603.35 L1176.95 611.5500000000001" stroke="#b1b8bf" stroke-width="3.7" stroke-linecap="round"/></svg>
<span class="t" style="left:970.82px;top:634.14px;font-size:40px;line-height:40px;color:#2f455c;transform:scaleX(1.0773);">0</span>
<div style="position:absolute;left:1222px;top:585px;width:245px;height:98px;border:1px solid #9eb0c2;border-radius:3px;"></div>
<span class="t" style="left:1233.53px;top:597.18px;font-size:15.5px;line-height:15.5px;color:#31475e;transform:scaleX(0.9216);-webkit-text-stroke:0.3px #31475e;">PHOTOS ADDED</span>
<div style="position:absolute;left:1396.25px;top:593px;width:27.5px;height:29px;background:#e2e8ef;border-radius:3px;"></div>
<div style="position:absolute;left:1432.2px;top:593px;width:27.6px;height:29px;background:#e2e8ef;border-radius:3px;"></div>
<div style="position:absolute;left:1403.15px;top:600.0px;width:13.75px;height:3px;background:#b5bbc0;border-radius:1px;"></div>
<div style="position:absolute;left:1403.15px;top:605.75px;width:13.75px;height:3px;background:#b5bbc0;border-radius:1px;"></div>
<div style="position:absolute;left:1403.15px;top:611.5px;width:13.75px;height:3px;background:#b5bbc0;border-radius:1px;"></div>
<svg style="left:1432.2px;top:593px" width="28" height="29" viewBox="1432.2 593 28 29"><path d="M1441.95 603.35 L1450.2500000000002 611.5500000000001 M1450.2500000000002 603.35 L1441.95 611.5500000000001" stroke="#b1b8bf" stroke-width="3.7" stroke-linecap="round"/></svg>
<span class="t" style="left:1236.38px;top:634.14px;font-size:40px;line-height:40px;color:#2f455c;transform:scaleX(1.0536);">2</span>
<div style="position:absolute;left:427px;top:709px;width:245px;height:98px;border:1px solid #9eb0c2;border-radius:3px;"></div>
<span class="t" style="left:438.67px;top:721.18px;font-size:15.5px;line-height:15.5px;color:#31475e;transform:scaleX(0.8624);-webkit-text-stroke:0.3px #31475e;">USERS CREATED</span>
<div style="position:absolute;left:601.25px;top:717px;width:27.5px;height:29px;background:#e2e8ef;border-radius:3px;"></div>
<div style="position:absolute;left:637.2px;top:717px;width:27.6px;height:29px;background:#e2e8ef;border-radius:3px;"></div>
<div style="position:absolute;left:608.15px;top:724.0px;width:13.75px;height:3px;background:#b5bbc0;border-radius:1px;"></div>
<div style="position:absolute;left:608.15px;top:729.75px;width:13.75px;height:3px;background:#b5bbc0;border-radius:1px;"></div>
<div style="position:absolute;left:608.15px;top:735.5px;width:13.75px;height:3px;background:#b5bbc0;border-radius:1px;"></div>
<svg style="left:637.2px;top:717px" width="28" height="29" viewBox="637.2 717 28 29"><path d="M646.95 727.35 L655.25 735.5500000000001 M655.25 727.35 L646.95 735.5500000000001" stroke="#b1b8bf" stroke-width="3.7" stroke-linecap="round"/></svg>
<span class="t" style="left:440.82px;top:758.14px;font-size:40px;line-height:40px;color:#2f455c;transform:scaleX(1.0773);">0</span>
<div style="position:absolute;left:692px;top:709px;width:245px;height:98px;border:1px solid #9eb0c2;border-radius:3px;"></div>
<span class="t" style="left:704.64px;top:721.18px;font-size:15.5px;line-height:15.5px;color:#31475e;transform:scaleX(0.8557);-webkit-text-stroke:0.3px #31475e;">VOICE MESSAGES RE...</span>
<div style="position:absolute;left:866.25px;top:717px;width:27.5px;height:29px;background:#e2e8ef;border-radius:3px;"></div>
<div style="position:absolute;left:902.2px;top:717px;width:27.6px;height:29px;background:#e2e8ef;border-radius:3px;"></div>
<div style="position:absolute;left:873.15px;top:724.0px;width:13.75px;height:3px;background:#b5bbc0;border-radius:1px;"></div>
<div style="position:absolute;left:873.15px;top:729.75px;width:13.75px;height:3px;background:#b5bbc0;border-radius:1px;"></div>
<div style="position:absolute;left:873.15px;top:735.5px;width:13.75px;height:3px;background:#b5bbc0;border-radius:1px;"></div>
<svg style="left:902.2px;top:717px" width="28" height="29" viewBox="902.2 717 28 29"><path d="M911.95 727.35 L920.25 735.5500000000001 M920.25 727.35 L911.95 735.5500000000001" stroke="#b1b8bf" stroke-width="3.7" stroke-linecap="round"/></svg>
<span class="t" style="left:705.82px;top:758.14px;font-size:40px;line-height:40px;color:#2f455c;transform:scaleX(1.0773);">0</span>
<div style="position:absolute;left:427px;top:833px;width:1040px;height:80px;border:1px solid #9eb0c2;border-radius:3px;"></div>
<span class="t" style="left:438.55px;top:845.18px;font-size:15.5px;line-height:15.5px;color:#31475e;transform:scaleX(0.9019);-webkit-text-stroke:0.3px #31475e;">LOGINS: 3</span>
<div style="position:absolute;left:1424.2px;top:841px;width:28.6px;height:28.5px;background:#e2e8ef;border-radius:3px;"></div>
<div style="position:absolute;left:1424.2px;top:870px;width:28.6px;height:28px;background:#e2e8ef;border-radius:3px;"></div>
<div style="position:absolute;left:1431.4px;top:848.0px;width:13.75px;height:3px;background:#b5bbc0;border-radius:1px;"></div>
<div style="position:absolute;left:1431.4px;top:853.75px;width:13.75px;height:3px;background:#b5bbc0;border-radius:1px;"></div>
<div style="position:absolute;left:1431.4px;top:859.5px;width:13.75px;height:3px;background:#b5bbc0;border-radius:1px;"></div>
<svg style="left:1424.5px;top:870px" width="28" height="29" viewBox="1424.5 870 28 29"><path d="M1434.25 880.35 L1442.5500000000002 888.5500000000001 M1442.5500000000002 880.35 L1434.25 888.5500000000001" stroke="#b1b8bf" stroke-width="3.7" stroke-linecap="round"/></svg>
<div style="position:absolute;left:1866.5px;top:775.5px;width:49px;height:49px;background:rgba(255,100,100,0.17);border-radius:50%;"></div>
<div style="position:absolute;left:1836px;top:746px;width:60px;height:60px;background:#0a62c9;border-radius:50%;box-shadow:0 2px 8px rgba(0,0,0,0.25);"></div>
<span class="t" style="left:1853.86px;top:755.55px;font-size:44px;line-height:44px;color:#ffffff;font-weight:700;transform:scaleX(0.9586);">?</span>
<div style="position:absolute;left:1874.5px;top:783.5px;width:33px;height:33px;background:#ff6464;border-radius:50%;"></div>
<span class="t" style="left:1886.53px;top:790.41px;font-size:17px;line-height:17px;color:#ffffff;font-weight:700;">1</span>
<svg style="left:0px;top:0px" width="57" height="889" viewBox="0 0 57 889" fill="none" stroke-linecap="round" stroke-linejoin="round"><defs><clipPath id="lg"><rect x="7" y="18.8" width="41" height="40.3" rx="8"/></clipPath><linearGradient id="lgg" x1="0" y1="0" x2="1" y2="1"><stop offset="0" stop-color="#6b8aa8"/><stop offset="0.55" stop-color="#3c6289"/><stop offset="1" stop-color="#3c6289"/></linearGradient></defs><rect x="7" y="18.8" width="41" height="40.3" rx="8" fill="url(#lgg)"/><g clip-path="url(#lg)" fill="#a1a3a7" stroke="none" fill-rule="evenodd"><path d="M-3.40 21.2 A13.6 6.4 0 1 0 23.80 21.2 A13.6 6.4 0 1 0 -3.40 21.2 Z M-0.60 21.2 A10.8 2.8 0 1 0 21.00 21.2 A10.8 2.8 0 1 0 -0.60 21.2 Z"/><path d="M-4.10 23.4 A17.4 11.4 0 1 0 30.70 23.4 A17.4 11.4 0 1 0 -4.10 23.4 Z M-1.30 23.4 A14.6 7.2 0 1 0 27.90 23.4 A14.6 7.2 0 1 0 -1.30 23.4 Z"/><path d="M-5.20 26.1 A21.1 17.3 0 1 0 37.00 26.1 A21.1 17.3 0 1 0 -5.20 26.1 Z M-2.40 26.1 A18.3 12.1 0 1 0 34.20 26.1 A18.3 12.1 0 1 0 -2.40 26.1 Z"/><path d="M-5.70 29.3 A24.2 23.7 0 1 0 42.70 29.3 A24.2 23.7 0 1 0 -5.70 29.3 Z M-2.90 29.3 A21.4 18.5 0 1 0 39.90 29.3 A21.4 18.5 0 1 0 -2.90 29.3 Z"/><path d="M-7.80 30 A27.3 32.4 0 1 0 46.80 30 A27.3 32.4 0 1 0 -7.80 30 Z M-5.00 30 A24.5 26.6 0 1 0 44.00 30 A24.5 26.6 0 1 0 -5.00 30 Z"/></g><path d="M21.6 121 A14.2 14.2 0 1 1 36.4 121" stroke="#94979c" stroke-width="1.1"/><circle cx="28.6" cy="113.2" r="2.3" stroke="#47688e" stroke-width="1.1"/><path d="M30 111.2 L35.8 102.3" stroke="#47688e" stroke-width="1.1"/><path d="M24.3 177.2 L13 166.8 V155.5 H24.2 L40.2 170.3 Q42 172 40.3 173.7 L32.3 181.5 Q30.5 183 28.7 181.4 L27.3 180.1" stroke="#94979c" stroke-width="1.1"/><circle cx="19.6" cy="162" r="2.7" stroke="#94979c" stroke-width="1.1"/><path d="M27.9 156 L42.3 169.6 Q44.6 172 42.4 174.4 L33.8 183.4" stroke="#47688e" stroke-width="1.1"/><path d="M23.3 220 V214 Q23.3 212.5 24.8 212.5 H37.8 L44.9 220 V243 Q44.9 244.4 43.4 244.4 H34.8 M37.8 212.5 V220 H44.9" stroke="#94979c" stroke-width="1.1"/><path d="M30.6 225.7 H41.5 M32 229.5 H41.5 M33.5 240.3 H41.5 M30.5 236 L33.5 233.6 L36.6 237.4 L41 233.2 M38.8 233 H41.2 V235.4" stroke="#94979c" stroke-width="1"/><path d="M15.5 228.2 L25.4 222.7 L29.1 229.2 L14.9 237.2 L13.4 235.3 L16.1 231.6 Z" stroke="#47688e" stroke-width="1.1"/><path d="M20.6 234.3 L26.3 244.4 Q27.6 246.2 29.2 245.2 Q30.8 244.2 29.7 242.4 L24 232.4" stroke="#47688e" stroke-width="1.1"/><path d="M20.8 301.7 H16.8 Q14.3 301.7 14.3 299.2 V281 Q14.3 278.5 16.8 278.5 H25.4 Q27.9 278.5 27.9 281 V283.8 H41.5 Q44 283.8 44 286.3 V299.2 Q44 301.7 41.5 301.7 H24.6" stroke="#94979c" stroke-width="1.1"/><path d="M32 278.9 H41 Q43.7 278.9 43.7 281.4" stroke="#47688e" stroke-width="1.1"/><g transform="translate(29.1 351.9) rotate(45.7)"><rect x="-17" y="-3.6" width="34" height="7.2" rx="1" stroke="#94979c" stroke-width="1.1"/><path d="M-13.5 -3.6 V-0.2" stroke="#94979c" stroke-width="0.9"/><path d="M-10.8 -3.6 V-1.2" stroke="#94979c" stroke-width="0.9"/><path d="M-8.1 -3.6 V-0.2" stroke="#94979c" stroke-width="0.9"/><path d="M-5.4 -3.6 V-1.2" stroke="#94979c" stroke-width="0.9"/><path d="M-2.7 -3.6 V-0.2" stroke="#94979c" stroke-width="0.9"/><path d="M0.0 -3.6 V-1.2" stroke="#94979c" stroke-width="0.9"/><path d="M2.7 -3.6 V-0.2" stroke="#94979c" stroke-width="0.9"/><path d="M5.4 -3.6 V-1.2" stroke="#94979c" stroke-width="0.9"/><path d="M8.1 -3.6 V-0.2" stroke="#94979c" stroke-width="0.9"/><circle cx="12.6" cy="0.2" r="1.2" stroke="#94979c" stroke-width="0.9"/></g><g transform="translate(28.8 351.5) rotate(-45.7)"><path d="M-19.8 0 L-14.5 -2.7 H17 Q19.8 -2.7 19.8 0 Q19.8 2.7 17 2.7 H-14.5 Z M14.5 -2.7 V0.6" stroke="#47688e" stroke-width="1.1"/></g><path d="M20.5 399.2 V426.8" stroke="#94979c" stroke-width="1.1"/><path d="M22.3 412.8 V400.5 Q26 402.6 30.4 402.3 Q35 401.8 39 399.2 Q40.8 398.8 41.1 401 V413.7 Q39 411.8 36.6 412.5 M34.1 414.1 Q30 415.8 27 415 Q24 414.2 22.3 412.8" stroke="#94979c" stroke-width="1.1"/><path d="M23.6 407.5 L28.5 402.6" stroke="#47688e" stroke-width="0.9"/><path d="M23.6 410.6 L31.6 402.8" stroke="#47688e" stroke-width="0.9"/><path d="M24.5 412.9 L34.8 402.4" stroke="#47688e" stroke-width="0.9"/><path d="M27.6 413.6 L38.2 402.6" stroke="#47688e" stroke-width="0.9"/><path d="M31 414 L39.6 405" stroke="#47688e" stroke-width="0.9"/><path d="M36 412 L39.6 408.3" stroke="#47688e" stroke-width="0.9"/><ellipse cx="28.9" cy="466.1" rx="5.7" ry="6.8" stroke="#9a9da3" stroke-width="1.1"/><path d="M23.6 488.3 H21.5 Q19 488.3 19 485.8 V479 Q19 474.6 24.8 473.5 L28.9 479.7 L32.8 473.5 Q39 474.6 39 479 V485.8 Q39 488.3 36.5 488.3 H27.3" stroke="#9a9da3" stroke-width="1.1"/><path d="M14.8 549.7 V536.8 Q14.8 535.3 16.3 535.3 H19.8 Q21.3 535.3 21.3 536.8 V549.7 Z" stroke="#94979c" stroke-width="1.1"/><path d="M16.1 542.3 L20.0 538.3" stroke="#47688e" stroke-width="0.9"/><path d="M16.1 544.9 L20.0 540.9" stroke="#47688e" stroke-width="0.9"/><path d="M16.1 547.5 L20.0 543.5" stroke="#47688e" stroke-width="0.9"/><path d="M16.1 548.6 L20.0 546.1" stroke="#47688e" stroke-width="0.9"/><path d="M16.1 548.6 L20.0 548.7" stroke="#47688e" stroke-width="0.9"/><path d="M25.2 549.7 V521.3 Q25.2 519.8 26.7 519.8 H31.299999999999997 Q32.8 519.8 32.8 521.3 V549.7 Z" stroke="#94979c" stroke-width="1.1"/><path d="M26.5 526.8 L31.499999999999996 522.8" stroke="#47688e" stroke-width="0.9"/><path d="M26.5 529.4 L31.499999999999996 525.4" stroke="#47688e" stroke-width="0.9"/><path d="M26.5 532.0 L31.499999999999996 528.0" stroke="#47688e" stroke-width="0.9"/><path d="M26.5 534.6 L31.499999999999996 530.6" stroke="#47688e" stroke-width="0.9"/><path d="M26.5 537.2 L31.499999999999996 533.2" stroke="#47688e" stroke-width="0.9"/><path d="M26.5 539.8 L31.499999999999996 535.8" stroke="#47688e" stroke-width="0.9"/><path d="M26.5 542.4 L31.499999999999996 538.4" stroke="#47688e" stroke-width="0.9"/><path d="M26.5 545.0 L31.499999999999996 541.0" stroke="#47688e" stroke-width="0.9"/><path d="M26.5 547.6 L31.499999999999996 543.6" stroke="#47688e" stroke-width="0.9"/><path d="M26.5 548.6 L31.499999999999996 546.2" stroke="#47688e" stroke-width="0.9"/><path d="M26.5 548.6 L31.499999999999996 548.8" stroke="#47688e" stroke-width="0.9"/><path d="M36.6 549.7 V529.0 Q36.6 527.5 38.1 527.5 H41.6 Q43.1 527.5 43.1 529.0 V549.7 Z" stroke="#94979c" stroke-width="1.1"/><path d="M37.9 534.5 L41.800000000000004 530.5" stroke="#47688e" stroke-width="0.9"/><path d="M37.9 537.1 L41.800000000000004 533.1" stroke="#47688e" stroke-width="0.9"/><path d="M37.9 539.7 L41.800000000000004 535.7" stroke="#47688e" stroke-width="0.9"/><path d="M37.9 542.3 L41.800000000000004 538.3" stroke="#47688e" stroke-width="0.9"/><path d="M37.9 544.9 L41.800000000000004 540.9" stroke="#47688e" stroke-width="0.9"/><path d="M37.9 547.5 L41.800000000000004 543.5" stroke="#47688e" stroke-width="0.9"/><path d="M37.9 548.6 L41.800000000000004 546.1" stroke="#47688e" stroke-width="0.9"/><path d="M37.9 548.6 L41.800000000000004 548.7" stroke="#47688e" stroke-width="0.9"/><path d="M26 585.5 H22.5 Q20.2 585.5 20.2 587.8 V600 M20.2 608 V608.9 Q20.2 611.2 22.5 611.2 H24 M28.5 611.2 H42.2 Q44.5 611.2 44.5 608.9 V587.8 Q44.5 585.5 42.2 585.5 H38.8" stroke="#94979c" stroke-width="1.1"/><path d="M25.8 588.4 V584.5 H29 V581 H35.6 V584.5 H38.8 V588.4 Z" stroke="#47688e" stroke-width="1.1"/><path d="M14 604 H28 M24 600 L28 604 L24 608" stroke="#47688e" stroke-width="1.1"/><path d="M31.1 664.0 L33.3 665.5 L32.5 667.4 L30.0 666.9 L27.8 669.0 L28.3 671.5 L26.4 672.3 L25.0 670.2 L22.0 670.1 L20.5 672.3 L18.6 671.5 L19.1 669.0 L17.0 666.8 L14.5 667.3 L13.7 665.4 L15.8 664.0 L15.9 661.0 L13.7 659.5 L14.5 657.6 L17.0 658.1 L19.2 656.0 L18.7 653.5 L20.6 652.7 L22.0 654.8 L25.0 654.9 L26.5 652.7 L28.4 653.5 L27.9 656.0 L30.0 658.2 L32.5 657.7 L33.3 659.6 L31.2 661.0 Z" stroke="#94979c" stroke-width="1"/><circle cx="23.5" cy="662.5" r="3.6" stroke="#94979c" stroke-width="1"/><path d="M43.0 649.6 L45.0 650.4 L44.6 652.0 L42.5 652.0 L41.2 654.0 L42.0 655.9 L40.6 656.8 L39.2 655.3 L36.8 655.8 L36.0 657.8 L34.4 657.4 L34.4 655.3 L32.4 654.0 L30.5 654.8 L29.6 653.4 L31.1 652.0 L30.6 649.6 L28.6 648.8 L29.0 647.2 L31.1 647.2 L32.4 645.2 L31.6 643.3 L33.0 642.4 L34.4 643.9 L36.8 643.4 L37.6 641.4 L39.2 641.8 L39.2 643.9 L41.2 645.2 L43.1 644.4 L44.0 645.8 L42.5 647.2 Z" stroke="#47688e" stroke-width="1"/><circle cx="36.8" cy="649.6" r="2.9" stroke="#47688e" stroke-width="1"/><path d="M12.8 855.3 L24.5 866.5 L12.8 877.8 M24.2 855.3 L35.9 866.5 L24.2 877.8" stroke="#94979c" stroke-width="1.2" stroke-linecap="butt" stroke-linejoin="miter"/></svg>
<svg style="left:0;top:0" width="200" height="130"><rect x="164.3" y="106.65" width="2.6" height="2.5" rx="0.8" fill="#4c5056"/><rect x="169" y="107.05000000000001" width="9.8" height="1.7" rx="0.8" fill="#4c5056"/><rect x="164.3" y="111.1" width="2.6" height="2.5" rx="0.8" fill="#4c5056"/><rect x="169" y="111.5" width="9.8" height="1.7" rx="0.8" fill="#4c5056"/><rect x="164.3" y="115.65" width="2.6" height="2.5" rx="0.8" fill="#4c5056"/><rect x="169" y="116.05000000000001" width="9.8" height="1.7" rx="0.8" fill="#4c5056"/></svg>
<svg style="left:1690px;top:24px" width="30" height="26" viewBox="1690 24 30 26" fill="none"><path d="M1703.4 30.2 V40.2 M1699.2 36.2 L1703.4 40.4 L1707.6 36.2" stroke="#a3a6ac" stroke-width="1.8" stroke-linecap="round" stroke-linejoin="round"/><path d="M1697.3 40.2 H1700.6 L1703.4 42.8 L1706.2 40.2 H1709.3 Q1710.8 40.2 1710.8 41.7 V43.4 Q1710.8 44.9 1709.3 44.9 H1697.3 Q1695.8 44.9 1695.8 43.4 V41.7 Q1695.8 40.2 1697.3 40.2 Z" fill="#a3a6ac"/><circle cx="1708.4" cy="42.6" r="0.75" fill="#475f7f"/></svg>
<svg style="left:1840px;top:16px" width="40" height="36" viewBox="1840 16 40 36"><path d="M1855 29.2 Q1856 29.2 1856 30.3 Q1859.9 31.2 1859.9 35.8 Q1859.9 39.6 1862.2 41.6 Q1862.9 42.3 1862.3 43 H1847.7 Q1847.1 42.3 1847.8 41.6 Q1850.1 39.6 1850.1 35.8 Q1850.1 31.2 1854 30.3 Q1854 29.2 1855 29.2 Z" fill="#9a9ca1"/><path d="M1853 44.2 H1857 Q1857 46.6 1855 46.6 Q1853 46.6 1853 44.2 Z" fill="#9a9ca1"/><circle cx="1865.6" cy="27.3" r="5.5" fill="#968c45"/></svg>
<svg style="left:1268px;top:401px" width="12.8" height="14.6" viewBox="0 0 12.8 14.6"><rect x="2.9" y="0" width="1.5" height="3" rx="0.5" fill="#000000"/><rect x="8.5" y="0" width="1.5" height="3" rx="0.5" fill="#000000"/><path d="M1.3 1.8 H11.5 Q12.8 1.8 12.8 3.1 V4.1 H0 V3.1 Q0 1.8 1.3 1.8 Z" fill="#000000"/><rect x="0" y="4.1" width="12.8" height="1.7" fill="#8e8e8e"/><path d="M0 5.8 H12.8 V13.3 Q12.8 14.6 11.5 14.6 H1.3 Q0 14.6 0 13.3 Z" fill="#000000"/><rect x="1.9" y="7.2" width="2" height="2" rx="0.3" fill="#ffffff"/><rect x="1.9" y="10.9" width="2" height="2" rx="0.3" fill="#ffffff"/><rect x="5.4" y="7.2" width="2" height="2" rx="0.3" fill="#ffffff"/><rect x="5.4" y="10.9" width="2" height="2" rx="0.3" fill="#ffffff"/><rect x="8.9" y="7.2" width="2" height="2" rx="0.3" fill="#ffffff"/><rect x="8.9" y="10.9" width="2" height="2" rx="0.3" fill="#ffffff"/></svg>
<svg style="left:1450.2px;top:401px" width="12.8" height="14.6" viewBox="0 0 12.8 14.6"><rect x="2.9" y="0" width="1.5" height="3" rx="0.5" fill="#000000"/><rect x="8.5" y="0" width="1.5" height="3" rx="0.5" fill="#000000"/><path d="M1.3 1.8 H11.5 Q12.8 1.8 12.8 3.1 V4.1 H0 V3.1 Q0 1.8 1.3 1.8 Z" fill="#000000"/><rect x="0" y="4.1" width="12.8" height="1.7" fill="#8e8e8e"/><path d="M0 5.8 H12.8 V13.3 Q12.8 14.6 11.5 14.6 H1.3 Q0 14.6 0 13.3 Z" fill="#000000"/><rect x="1.9" y="7.2" width="2" height="2" rx="0.3" fill="#ffffff"/><rect x="1.9" y="10.9" width="2" height="2" rx="0.3" fill="#ffffff"/><rect x="5.4" y="7.2" width="2" height="2" rx="0.3" fill="#ffffff"/><rect x="5.4" y="10.9" width="2" height="2" rx="0.3" fill="#ffffff"/><rect x="8.9" y="7.2" width="2" height="2" rx="0.3" fill="#ffffff"/><rect x="8.9" y="10.9" width="2" height="2" rx="0.3" fill="#ffffff"/></svg>
<svg style="left:0;top:0" width="200" height="420"><circle cx="156.9" cy="359.4" r="12" stroke="#565a62" stroke-width="1.4" fill="none"/><path d="M154.6 357.8 L153.2 362.6 H155.2" stroke="#565a62" stroke-width="1.1" fill="none"/><path d="M140.3 353.6 Q139.8 351.5 142 350 Q143.8 349 144.2 346 Q145.6 337.2 156 336.3 Q167.5 336 170 346.5 L170.3 352.8 Q169.6 355 167.6 353.4 Q165 350.6 158 351.8 Q150 353.2 143 354.8 Q141 355.2 140.3 353.6 Z" fill="#43698c" stroke="#3a5c7e" stroke-width="1"/><path d="M150 338.5 Q148.2 343 148 351.5 M156.5 337 Q155 342 155.2 350.8 M163.2 350 Q162.5 342.5 166.5 341.8 Q168.8 341.6 169 346" stroke="#3a5c7e" stroke-width="0.9" fill="none"/><path d="M147 371.5 L156.9 385.8 L166.7 371.5 M147 371.5 L141 375 Q137.4 377 137.4 381 V398.4 Q137.4 401.9 140.9 401.9 H172.7 Q176.2 401.9 176.2 398.4 V381 Q176.2 377 172.6 375 L166.7 371.5" stroke="#565a62" stroke-width="1.6" fill="none" stroke-linejoin="round"/></svg>
<svg style="left:0;top:0" width="200" height="600"><path d="M132.4 546.5 H144.8 L147.2 540.3 Q147.8 538.8 149.4 538.8 H164.4 Q166 538.8 166.6 540.3 L169 546.5 H181.7 Q183.7 546.5 183.7 548.5 V575 Q183.7 577 181.7 577 H132.4 Q130.4 577 130.4 575 V548.5 Q130.4 546.5 132.4 546.5 Z" stroke="#565a62" stroke-width="1.6" fill="#94979b" stroke-linejoin="round"/><path d="M134.2 546.3 V544.4 Q134.2 542.6 136 542.6 H140.7 Q142.5 542.6 142.5 544.4 V546.3" stroke="#565a62" stroke-width="1.5" fill="none"/><circle cx="156.9" cy="560" r="9.15" stroke="#43698c" stroke-width="5.7" fill="#96989c"/><circle cx="177.2" cy="552.8" r="2.5" stroke="#565a62" stroke-width="1.3" fill="none"/><circle cx="180.3" cy="534.5" r="9.8" fill="#43698c" stroke="#3a5c7e" stroke-width="1"/><path d="M176.8 534.6 H183.8 M180.3 531.1 V538.1" stroke="#9ea8b3" stroke-width="1.3"/></svg>
<svg style="left:1600px;top:320px" width="160" height="90" viewBox="1600 320 160 90"><path d="M1622.8 365.1 L1632.4 367.1 L1656.2 388.9 L1641.5 386.3 Z" fill="#84878c"/><path d="M1612.7 371.8 L1622.8 365.1 L1632.4 367.1 L1641 363.5 L1669.7 381.3 L1656.2 388.9 L1641.5 386.3 L1629.9 394.9 Z M1622.8 365.1 L1641.5 386.3 M1632.4 367.1 L1656.2 388.9" stroke="#565a62" stroke-width="1.5" fill="none" stroke-linejoin="round"/><path d="M1652.5 379.2 Q1641.3 362 1641.3 354.4 A11.2 11.2 0 0 1 1663.7 354.4 Q1663.7 362 1652.5 379.2 Z" fill="#43698c" stroke="#3a5c7e" stroke-width="1"/><circle cx="1652.5" cy="354.4" r="5.2" fill="#43698c" stroke="#99a0a9" stroke-width="2.8"/><circle cx="1664.5" cy="345.5" r="9.9" fill="#43698c" stroke="#3a5c7e" stroke-width="1.1"/><path d="M1661 345.6 H1668 M1664.5 342.1 V349.1" stroke="#9ea8b3" stroke-width="1.3"/></svg>
<svg style="left:1658.2px;top:205px" width="12.8" height="14.6" viewBox="0 0 12.8 14.6"><rect x="2.9" y="0" width="1.5" height="3" rx="0.5" fill="#3c3f45"/><rect x="8.5" y="0" width="1.5" height="3" rx="0.5" fill="#3c3f45"/><path d="M1.3 1.8 H11.5 Q12.8 1.8 12.8 3.1 V4.1 H0 V3.1 Q0 1.8 1.3 1.8 Z" fill="#3c3f45"/><rect x="0" y="4.1" width="12.8" height="1.7" fill="#6e7075"/><path d="M0 5.8 H12.8 V13.3 Q12.8 14.6 11.5 14.6 H1.3 Q0 14.6 0 13.3 Z" fill="#3c3f45"/><rect x="1.9" y="7.2" width="2" height="2" rx="0.3" fill="#97999d"/><rect x="1.9" y="10.9" width="2" height="2" rx="0.3" fill="#97999d"/><rect x="5.4" y="7.2" width="2" height="2" rx="0.3" fill="#97999d"/><rect x="5.4" y="10.9" width="2" height="2" rx="0.3" fill="#97999d"/><rect x="8.9" y="7.2" width="2" height="2" rx="0.3" fill="#97999d"/><rect x="8.9" y="10.9" width="2" height="2" rx="0.3" fill="#97999d"/></svg>
<svg style="left:1840.8px;top:205px" width="12.8" height="14.6" viewBox="0 0 12.8 14.6"><rect x="2.9" y="0" width="1.5" height="3" rx="0.5" fill="#3c3f45"/><rect x="8.5" y="0" width="1.5" height="3" rx="0.5" fill="#3c3f45"/><path d="M1.3 1.8 H11.5 Q12.8 1.8 12.8 3.1 V4.1 H0 V3.1 Q0 1.8 1.3 1.8 Z" fill="#3c3f45"/><rect x="0" y="4.1" width="12.8" height="1.7" fill="#6e7075"/><path d="M0 5.8 H12.8 V13.3 Q12.8 14.6 11.5 14.6 H1.3 Q0 14.6 0 13.3 Z" fill="#3c3f45"/><rect x="1.9" y="7.2" width="2" height="2" rx="0.3" fill="#97999d"/><rect x="1.9" y="10.9" width="2" height="2" rx="0.3" fill="#97999d"/><rect x="5.4" y="7.2" width="2" height="2" rx="0.3" fill="#97999d"/><rect x="5.4" y="10.9" width="2" height="2" rx="0.3" fill="#97999d"/><rect x="8.9" y="7.2" width="2" height="2" rx="0.3" fill="#97999d"/><rect x="8.9" y="10.9" width="2" height="2" rx="0.3" fill="#97999d"/></svg>

</body></html>
